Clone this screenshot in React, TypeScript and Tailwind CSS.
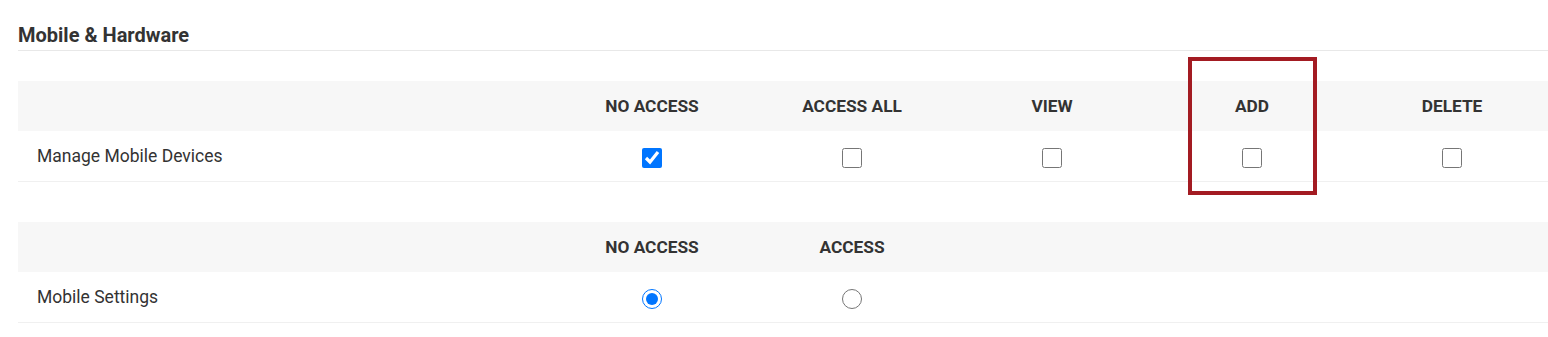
import React from "react"

const font = { fontFamily: "Roboto, 'Liberation Sans', sans-serif" }

const Check = ({ checked }: { checked?: boolean }) => (
    <input
        type="checkbox"
        defaultChecked={checked}
        className="w-5 h-5 m-0 accent-[#0075ff] cursor-pointer"
    />
)

const Radio = ({ checked, name }: { checked?: boolean; name: string }) => (
    <input
        type="radio"
        name={name}
        defaultChecked={checked}
        className="w-5 h-5 m-0 accent-[#0075ff] cursor-pointer"
    />
)

const PermTable = ({ cols, label, cells }: { cols: string[]; label: string; cells: React.ReactNode[] }) => {
    return (
        <div className="w-[1534px]">
            <div className="grid grid-cols-[534px_repeat(5,200px)] h-[50px] bg-[#f7f7f7] items-center pt-[2px]">
                <div></div>
                {cols.map((c) => (
                    <div key={c} className="text-center font-bold text-[17.3px] text-[#333] uppercase">{c}</div>
                ))}
            </div>
            <div className="grid grid-cols-[534px_repeat(5,200px)] h-[51px] items-center border-b border-[#f0f0f0]">
                <div className="pl-[19px] pt-[1px] text-[17.5px] text-[#333]">{label}</div>
                {cells.map((c, i) => (
                    <div key={i} className="flex justify-center pt-[3px]">{c}</div>
                ))}
            </div>
        </div>
    )
}

export default function App() {
    return (
        <div style={font} className="w-[1548px] h-[337px] bg-white overflow-hidden pl-[18px] pt-[23px]">
            <div className="border-b border-[#e8e8e8] pb-[3px]">
                <h2 className="text-[20px] leading-6 font-bold text-[#333]">Mobile &amp; Hardware</h2>
            </div>
            <div className="mt-[30px] relative">
                <PermTable
                    cols={["No Access", "Access All", "View", "Add", "Delete"]}
                    label="Manage Mobile Devices"
                    cells={[<Check checked />, <Check />, <Check />, <Check />, <Check />]}
                />
                <div className="absolute left-[1170px] top-[-24px] w-[129px] h-[138px] border-4 border-[#a31b22] pointer-events-none"></div>
            </div>
            <div className="mt-[40px]">
                <PermTable
                    cols={["No Access", "Access"]}
                    label="Mobile Settings"
                    cells={[<Radio name="ms" checked />, <Radio name="ms" />]}
                />
            </div>
        </div>
    )
}
